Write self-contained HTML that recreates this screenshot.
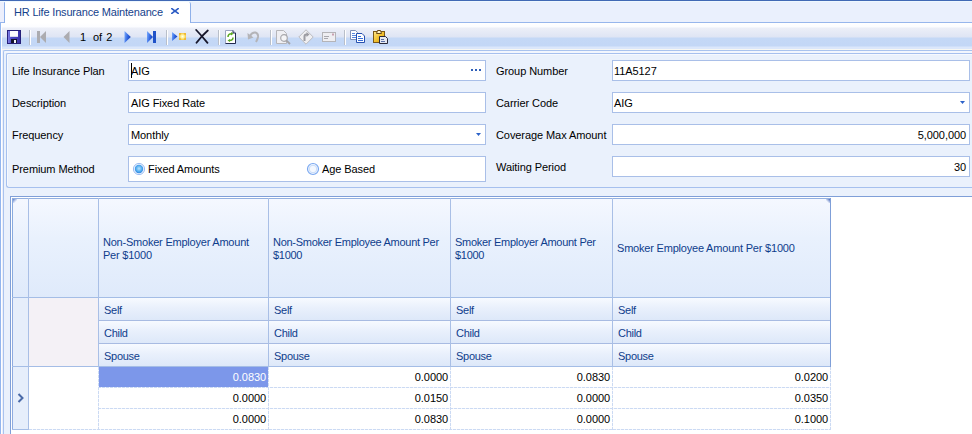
<!DOCTYPE html>
<html><head><meta charset="utf-8">
<style>
*{margin:0;padding:0;box-sizing:border-box}
html,body{width:972px;height:434px;overflow:hidden}
body{position:relative;background:#eaf1fc;font-family:"Liberation Sans",sans-serif;font-size:11px;color:#000;letter-spacing:-0.08px}
.a{position:absolute}
.t{position:absolute;line-height:13px;white-space:nowrap;margin-top:1px}
.inp{position:absolute;background:#fff;border:1px solid #a9bfe8}
.hd{color:#0f3d8c;letter-spacing:-0.28px}
.sep{position:absolute;width:1px;height:15px;top:30px;background:#b9bfca;box-shadow:1px 0 0 #fff}
</style></head><body>

<!-- top line -->
<div class="a" style="left:0;top:0;width:972px;height:1px;background:#4169b5"></div>
<div class="a" style="left:0;top:1px;width:972px;height:1px;background:#eef8ff"></div>
<!-- tab strip -->
<div class="a" style="left:0;top:2px;width:972px;height:20px;background:#eaf0fd"></div>
<div class="a" style="left:0;top:22px;width:972px;height:1px;background:#97b6ec"></div>
<!-- left sliver -->
<div class="a" style="left:0;top:2px;width:4px;height:20px;background:#eceffc"></div>
<!-- tab -->
<div class="a" style="left:4px;top:2px;width:187px;height:21px;background:#fff;border-left:1px solid #8eb0ea;border-right:1px solid #8eb0ea;border-top-left-radius:1px;border-top-right-radius:2px"></div>
<div class="t" style="left:14px;top:5px;color:#15428b;letter-spacing:-0.18px">HR Life Insurance Maintenance</div>
<svg class="a" style="left:171px;top:8px" width="8" height="6" viewBox="0 0 8 6"><path d="M0.8 0.6 L7.2 5.4 M7.2 0.6 L0.8 5.4" stroke="#2c5cc4" stroke-width="1.6" stroke-linecap="round"/></svg>

<!-- toolbar -->
<div class="a" style="left:0;top:23px;width:972px;height:27px;background:linear-gradient(#ffffff 0px,#fbfcff 4px,#eceff8 5px,#dfe5f4 14px,#c4d8f6 15px,#c3d7f6 23px,#dbe7fb 24px,#dbe7fb 27px)"></div>
<div class="a" style="left:0;top:49px;width:972px;height:1px;background:#f7f7f2"></div>
<div class="a" style="left:3px;top:50px;width:969px;height:384px;background:#f2f6fe;border-top:1px solid #a9c3ee;border-left:1px solid #a9c3ee;border-top-left-radius:2px"></div>
<div class="a" style="left:4px;top:53px;width:968px;height:381px;background:#eaf1fc"></div>

<!-- toolbar icons -->
<svg class="a" style="left:0;top:0" width="0" height="0"><defs>
<linearGradient id="bg1" x1="0" x2="1" y1="0" y2="0.3"><stop offset="0" stop-color="#7fb0ff"/><stop offset="0.6" stop-color="#2f64e0"/><stop offset="1" stop-color="#1a44b8"/></linearGradient>
<linearGradient id="sv" x1="0" x2="1"><stop offset="0" stop-color="#8a8ae8"/><stop offset="0.3" stop-color="#4a48c8"/><stop offset="1" stop-color="#3a30a8"/></linearGradient>
<linearGradient id="gold" x1="0" x2="1" y1="0" y2="1"><stop offset="0" stop-color="#ffe890"/><stop offset="0.5" stop-color="#f2c230"/><stop offset="1" stop-color="#d89810"/></linearGradient>
<radialGradient id="star"><stop offset="0" stop-color="#fffff0"/><stop offset="0.45" stop-color="#fff2a0"/><stop offset="1" stop-color="#f5c840"/></radialGradient>
</defs></svg>
<!-- save -->
<svg class="a" style="left:7px;top:30px" width="14" height="14" viewBox="0 0 14 14">
<rect x="0.5" y="0.5" width="13" height="13" fill="url(#sv)" stroke="#26207a"/>
<rect x="3" y="1" width="8" height="6" fill="#fbfbff"/>
<rect x="3" y="6" width="8" height="1" fill="#d8d8ee"/>
<rect x="4" y="9" width="6" height="4" fill="#12122a"/>
<rect x="7" y="10" width="2" height="3" fill="#f0f0f8"/>
</svg>
<div class="sep" style="left:29px"></div>
<!-- first -->
<svg class="a" style="left:37px;top:31px" width="10" height="12" viewBox="0 0 10 12">
<rect x="0" y="0" width="3" height="12" fill="#acacb0"/>
<path d="M9 0 L3 6 L9 12 Z" fill="#acacb0"/>
</svg>
<!-- prev -->
<svg class="a" style="left:63px;top:31px" width="7" height="12" viewBox="0 0 7 12"><path d="M6.5 0 L0.5 6 L6.5 12 Z" fill="#acacb0"/></svg>
<div class="t" style="left:80px;top:30px;letter-spacing:0">1</div>
<div class="t" style="left:93px;top:30px;letter-spacing:0;word-spacing:1px">of 2</div>
<!-- next -->
<svg class="a" style="left:124px;top:31px" width="7" height="12" viewBox="0 0 7 12"><path d="M0.5 0 L6.8 6 L0.5 12 Z" fill="url(#bg1)"/></svg>
<!-- last -->
<svg class="a" style="left:147px;top:31px" width="10" height="12" viewBox="0 0 10 12">
<path d="M0 0 L6 6 L0 12 Z" fill="url(#bg1)"/>
<rect x="6" y="0" width="3" height="12" fill="#2052c8"/>
</svg>
<div class="sep" style="left:166px"></div>
<!-- new -->
<svg class="a" style="left:172px;top:32px" width="15" height="9" viewBox="0 0 15 9">
<path d="M0 0 L5.5 4.5 L0 9 Z" fill="url(#bg1)"/>
<rect x="7" y="1" width="7" height="7" fill="url(#star)"/>
<circle cx="8" cy="2" r="0.7" fill="#e8a020"/><circle cx="13" cy="2" r="0.7" fill="#e8a020"/><circle cx="8" cy="7" r="0.7" fill="#e8a020"/><circle cx="13" cy="7" r="0.7" fill="#e8a020"/>
</svg>
<!-- delete -->
<svg class="a" style="left:195px;top:29px" width="14" height="15" viewBox="0 0 14 15"><path d="M1.2 1 Q6 6 12.5 13.8 M12.8 1.5 Q7 6.5 1.5 13.8" stroke="#16162a" stroke-width="1.8" fill="none" stroke-linecap="round"/></svg>
<div class="sep" style="left:218px"></div>
<!-- refresh -->
<svg class="a" style="left:225px;top:30px" width="12" height="14" viewBox="0 0 12 14">
<path d="M0.5 0.5 H8 L10.5 3 V13.5 H0.5 Z" fill="#fff" stroke="#9aa4c0"/>
<path d="M10.5 3 V13.5 H0.5" fill="none" stroke="#222a50"/>
<path d="M8 0.5 V3 H10.5" fill="#c8d0e8" stroke="#222a50"/>
<path d="M3 7 Q3 3.8 6.5 3.8" stroke="#5aaa20" stroke-width="1.5" fill="none"/><path d="M6 2 L8.5 3.8 L6 5.5 Z" fill="#5aaa20"/>
<path d="M8 7.5 Q8 10.5 4.5 10.5" stroke="#5aaa20" stroke-width="1.5" fill="none"/><path d="M5 9 L2.5 10.5 L5 12 Z" fill="#5aaa20"/>
</svg>
<!-- undo (gray) -->
<svg class="a" style="left:247px;top:30px" width="13" height="13" viewBox="0 0 13 13">
<path d="M3 6 Q5 2 8.5 2.5 Q11.5 3.5 11 7 Q10.5 9.5 9 12" stroke="#b4b4b8" stroke-width="2" fill="none"/>
<path d="M0.5 3 L1 9.5 L6.5 7.5 Z" fill="#b4b4b8"/>
</svg>
<div class="sep" style="left:270px"></div>
<!-- preview gray -->
<svg class="a" style="left:276px;top:30px" width="15" height="15" viewBox="0 0 15 15">
<path d="M0.5 0.5 H7.5 L10.5 3.5 V13.5 H0.5 Z" fill="#efeff3" stroke="#b6b6ba"/>
<circle cx="8" cy="8" r="3.3" fill="#f4f4f6" stroke="#a8a8ac" stroke-width="1.2"/>
<path d="M10.3 10.3 L14 14" stroke="#a4a4a8" stroke-width="1.8"/>
</svg>
<!-- goto diamond gray -->
<svg class="a" style="left:298px;top:29px" width="16" height="16" viewBox="0 0 16 16">
<path d="M8 0.8 L15.2 8 L8 15.2 L0.8 8 Z" fill="#efeff2" stroke="#bcbcc0"/>
<path d="M6.5 12 V7.5 Q6.5 5.5 8.5 5.5 H9" stroke="#9c9ca2" stroke-width="2" fill="none"/>
<path d="M8.5 3 L11.5 5.5 L8.5 8 Z" fill="#9c9ca2"/>
</svg>
<!-- envelope gray -->
<svg class="a" style="left:322px;top:32px" width="14" height="10" viewBox="0 0 14 10">
<rect x="0.5" y="0.5" width="13" height="9" fill="#eeeef2" stroke="#b4b4b8"/>
<path d="M2 4.5 H7 M2 6.5 H6" stroke="#a8a8ae"/>
<rect x="10" y="1.5" width="2" height="2" fill="#c8a0b0"/>
</svg>
<div class="sep" style="left:344px"></div>
<!-- copy -->
<svg class="a" style="left:350px;top:30px" width="16" height="14" viewBox="0 0 16 14">
<path d="M0.5 0.5 H5.5 L7.5 2.5 V9.5 H0.5 Z" fill="#fff" stroke="#8090b8"/>
<path d="M2 3.5 H5 M2 5.5 H6 M2 7.5 H6" stroke="#5a88e0"/>
<path d="M6.5 3.5 H12 L14.5 6 V12.5 H6.5 Z" fill="#fff" stroke="#2650b0"/>
<path d="M8 6.5 H11 M8 8.5 H13 M8 10.5 H13" stroke="#3a70d8"/>
</svg>
<!-- paste -->
<svg class="a" style="left:373px;top:30px" width="16" height="14" viewBox="0 0 16 14">
<rect x="0.5" y="1.5" width="11" height="11" fill="url(#gold)" stroke="#7a5818"/>
<path d="M3.5 3.5 L4.5 0.5 H7.5 L8.5 3.5 Z" fill="#fff4c8" stroke="#6a4a18"/>
<path d="M6.5 6.5 H12.5 L14.5 8.5 V13.5 H6.5 Z" fill="#e4e8f2" stroke="#2a2a3a"/>
<path d="M8 9.5 H11 M8 11.5 H12" stroke="#5a70a8"/>
</svg>

<!-- outer container borders -->
<div class="a" style="left:0;top:23px;width:1px;height:411px;background:#94b6ee"></div>
<div class="a" style="left:1px;top:23px;width:1px;height:411px;background:#ffffff"></div>
<div class="a" style="left:2px;top:50px;width:1px;height:384px;background:#eceffc"></div>

<!-- form group panel -->
<div class="a" style="left:6px;top:53px;width:970px;height:135px;border:1px solid #a6c0ee;border-right:none;border-radius:2px 0 0 3px;box-shadow:inset 1px 1px 0 #f6f9ff"></div>

<!-- left column -->
<div class="t" style="left:12px;top:64px">Life Insurance Plan</div>
<div class="inp" style="left:128px;top:60px;width:358px;height:21px"></div>
<div class="t" style="left:131px;top:64px">AIG</div>
<div class="a" style="left:131px;top:63px;width:1px;height:15px;background:#000"></div>
<svg class="a" style="left:470px;top:69px" width="12" height="3" viewBox="0 0 12 3"><rect x="1" y="0" width="2" height="2" fill="#2f5fb8"/><rect x="5" y="0" width="2" height="2" fill="#2f5fb8"/><rect x="9" y="0" width="2" height="2" fill="#2f5fb8"/></svg>

<div class="t" style="left:12px;top:96px">Description</div>
<div class="inp" style="left:128px;top:92px;width:358px;height:21px"></div>
<div class="t" style="left:131px;top:96px">AIG Fixed Rate</div>

<div class="t" style="left:12px;top:128px">Frequency</div>
<div class="inp" style="left:128px;top:124px;width:358px;height:21px"></div>
<div class="t" style="left:131px;top:128px">Monthly</div>
<svg class="a" style="left:476px;top:133px" width="5" height="3" viewBox="0 0 5 3"><path d="M0 0 H5 L2.5 3 Z" fill="#2c62c8"/></svg>

<div class="t" style="left:12px;top:162px">Premium Method</div>
<div class="inp" style="left:128px;top:156px;width:358px;height:26px"></div>
<svg class="a" style="left:132px;top:162px" width="14" height="14" viewBox="0 0 14 14">
<defs><radialGradient id="rg1" cx="0.5" cy="0.45" r="0.55"><stop offset="0" stop-color="#b8e4ff"/><stop offset="0.6" stop-color="#58b0f0"/><stop offset="1" stop-color="#2a84e0"/></radialGradient></defs>
<circle cx="7" cy="7" r="5.6" fill="#eef5ff" stroke="#9dbdf2" stroke-width="1"/>
<circle cx="7" cy="7" r="4.2" fill="url(#rg1)"/>
</svg>
<div class="t" style="left:148px;top:162px">Fixed Amounts</div>
<svg class="a" style="left:306px;top:162px" width="14" height="14" viewBox="0 0 14 14">
<circle cx="7" cy="7" r="5.5" fill="#f4f8ff" stroke="#7aa8f0" stroke-width="1.2"/>
<circle cx="7" cy="7" r="3.8" fill="none" stroke="#c8dcf8" stroke-width="1"/>
</svg>
<div class="t" style="left:322px;top:162px">Age Based</div>

<!-- right column -->
<div class="t" style="left:496px;top:64px">Group Number</div>
<div class="inp" style="left:612px;top:60px;width:358px;height:21px"></div>
<div class="t" style="left:614px;top:64px">11A5127</div>

<div class="t" style="left:496px;top:96px">Carrier Code</div>
<div class="inp" style="left:612px;top:92px;width:358px;height:21px"></div>
<div class="t" style="left:614px;top:96px">AIG</div>
<svg class="a" style="left:960px;top:101px" width="5" height="3" viewBox="0 0 5 3"><path d="M0 0 H5 L2.5 3 Z" fill="#2c62c8"/></svg>

<div class="t" style="left:496px;top:128px">Coverage Max Amount</div>
<div class="inp" style="left:612px;top:124px;width:358px;height:21px"></div>
<div class="t" style="left:900px;top:128px;width:66px;text-align:right">5,000,000</div>

<div class="t" style="left:496px;top:160px">Waiting Period</div>
<div class="inp" style="left:612px;top:156px;width:358px;height:21px"></div>
<div class="t" style="left:900px;top:160px;width:66px;text-align:right">30</div>

<!-- grid area -->
<div class="a" style="left:10px;top:196px;width:962px;height:238px;background:#fff;border-top:1px solid #7f9fd8;border-left:1px solid #7f9fd8"></div>

<!-- header band -->
<div class="a" style="left:12px;top:198px;width:819px;height:100px;background:linear-gradient(#f5f8ff,#e9f1fd 40%,#dfeafb);border-top:1px solid #93b0e0;border-left:1px solid #8aabdf"></div>
<div class="a" style="left:13px;top:199px;width:4px;height:4px;background:linear-gradient(135deg,#5a7cc8,rgba(120,150,220,0) 70%)"></div>
<div class="a" style="left:826px;top:199px;width:4px;height:4px;background:linear-gradient(225deg,#3f62b8,rgba(120,150,220,0) 70%)"></div>
<div class="a" style="left:12px;top:297px;width:819px;height:1px;background:#a4bde6"></div>

<!-- indicator column -->
<div class="a" style="left:12px;top:298px;width:17px;height:132px;background:#e6eefb;border-left:1px solid #8fabe0"></div>
<!-- empty column band area -->
<div class="a" style="left:29px;top:298px;width:69px;height:68px;background:#f4f1f6"></div>

<!-- band cells -->
<div class="a" style="left:99px;top:298px;width:732px;height:22px;background:linear-gradient(#f7faff,#e9f0fc 45%,#dde8f9)"></div>
<div class="a" style="left:99px;top:321px;width:732px;height:22px;background:linear-gradient(#f7faff,#e9f0fc 45%,#dde8f9)"></div>
<div class="a" style="left:99px;top:344px;width:732px;height:22px;background:linear-gradient(#f7faff,#e9f0fc 45%,#dde8f9)"></div>
<div class="a" style="left:98px;top:320px;width:733px;height:1px;background:#a8bbe2"></div>
<div class="a" style="left:98px;top:343px;width:733px;height:1px;background:#a8bbe2"></div>
<div class="a" style="left:12px;top:366px;width:819px;height:1px;background:#a4bde6"></div>

<!-- data rows -->
<div class="a" style="left:99px;top:367px;width:169px;height:20px;background:#7c97ea"></div>
<div class="a" style="left:98px;top:387px;width:733px;height:1px;background:repeating-linear-gradient(90deg,#cbdaf3 0 3px,#f3f6fd 3px 4px)"></div>
<div class="a" style="left:98px;top:408px;width:733px;height:1px;background:repeating-linear-gradient(90deg,#cbdaf3 0 3px,#f3f6fd 3px 4px)"></div>
<div class="a" style="left:12px;top:429px;width:17px;height:1px;background:#a4bde6"></div>
<div class="a" style="left:29px;top:429px;width:802px;height:1px;background:repeating-linear-gradient(90deg,#cbdaf3 0 3px,#f3f6fd 3px 4px)"></div>

<!-- column lines -->
<div class="a" style="left:28px;top:198px;width:1px;height:232px;background:#a9bfe6"></div>
<div class="a" style="left:98px;top:198px;width:1px;height:169px;background:#a9bfe6"></div>
<div class="a" style="left:268px;top:198px;width:1px;height:169px;background:#a9bfe6"></div>
<div class="a" style="left:450px;top:198px;width:1px;height:169px;background:#a9bfe6"></div>
<div class="a" style="left:612px;top:198px;width:1px;height:169px;background:#a9bfe6"></div>
<div class="a" style="left:830px;top:198px;width:1px;height:169px;background:#7f9fd8"></div>
<div class="a" style="left:830px;top:367px;width:1px;height:63px;background:repeating-linear-gradient(180deg,#cbdaf3 0 3px,#f3f6fd 3px 4px)"></div>
<div class="a" style="left:268px;top:367px;width:1px;height:63px;background:repeating-linear-gradient(180deg,#cbdaf3 0 3px,#f3f6fd 3px 4px)"></div>
<div class="a" style="left:450px;top:367px;width:1px;height:63px;background:repeating-linear-gradient(180deg,#cbdaf3 0 3px,#f3f6fd 3px 4px)"></div>
<div class="a" style="left:612px;top:367px;width:1px;height:63px;background:repeating-linear-gradient(180deg,#cbdaf3 0 3px,#f3f6fd 3px 4px)"></div>
<div class="a" style="left:98px;top:367px;width:1px;height:63px;background:repeating-linear-gradient(180deg,#cbdaf3 0 3px,#f3f6fd 3px 4px)"></div>

<!-- header texts -->
<div class="t hd" style="left:103px;top:235px;letter-spacing:-0.22px">Non-Smoker Employer Amount<br>Per $1000</div>
<div class="t hd" style="left:273px;top:235px">Non-Smoker Employee Amount Per<br>$1000</div>
<div class="t hd" style="left:455px;top:235px">Smoker Employer Amount Per<br>$1000</div>
<div class="t hd" style="left:617px;top:241px;letter-spacing:-0.2px">Smoker Employee Amount Per $1000</div>

<!-- band texts -->
<div class="t hd" style="left:104px;top:303px">Self</div>
<div class="t hd" style="left:104px;top:326px">Child</div>
<div class="t hd" style="left:104px;top:349px">Spouse</div>
<div class="t hd" style="left:274px;top:303px">Self</div>
<div class="t hd" style="left:274px;top:326px">Child</div>
<div class="t hd" style="left:274px;top:349px">Spouse</div>
<div class="t hd" style="left:456px;top:303px">Self</div>
<div class="t hd" style="left:456px;top:326px">Child</div>
<div class="t hd" style="left:456px;top:349px">Spouse</div>
<div class="t hd" style="left:618px;top:303px">Self</div>
<div class="t hd" style="left:618px;top:326px">Child</div>
<div class="t hd" style="left:618px;top:349px">Spouse</div>

<!-- data texts -->
<div class="t" style="left:100px;top:370px;width:166px;text-align:right;color:#fff">0.0830</div>
<div class="t" style="left:100px;top:391px;width:166px;text-align:right">0.0000</div>
<div class="t" style="left:100px;top:412px;width:166px;text-align:right">0.0000</div>
<div class="t" style="left:270px;top:370px;width:178px;text-align:right">0.0000</div>
<div class="t" style="left:270px;top:391px;width:178px;text-align:right">0.0150</div>
<div class="t" style="left:270px;top:412px;width:178px;text-align:right">0.0830</div>
<div class="t" style="left:452px;top:370px;width:158px;text-align:right">0.0830</div>
<div class="t" style="left:452px;top:391px;width:158px;text-align:right">0.0000</div>
<div class="t" style="left:452px;top:412px;width:158px;text-align:right">0.0000</div>
<div class="t" style="left:614px;top:370px;width:214px;text-align:right">0.0200</div>
<div class="t" style="left:614px;top:391px;width:214px;text-align:right">0.0350</div>
<div class="t" style="left:614px;top:412px;width:214px;text-align:right">0.1000</div>

<!-- row indicator -->
<svg class="a" style="left:17px;top:393px" width="7" height="10" viewBox="0 0 7 10"><path d="M1.5 1 L5.5 5 L1.5 9" stroke="#4a6aa8" stroke-width="2" fill="none"/></svg>

</body></html>
